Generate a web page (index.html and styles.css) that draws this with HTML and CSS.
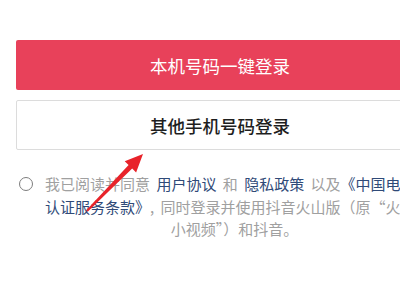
FILE: index.html
```html
<!DOCTYPE html>
<html lang="zh-CN">
<head>
<meta charset="utf-8">
<link rel="stylesheet" href="styles.css">
</head>
<body>
<div class="page">
  <div class="actions">
    <button class="btn btn-primary">本机号码一键登录</button>
    <button class="btn btn-secondary">其他手机号码登录</button>
  </div>
  <div class="agree">
    <span class="check"></span>
    <p class="agree-text"><span class="line">我已阅读并同意 <a class="link">用户协议</a> 和 <a class="link">隐私政策</a> 以及<a class="link">《中国电信</a></span><span class="line"><a class="link">认证服务条款》</a>, 同时登录并使用抖音火山版（原“火山</span><span class="line last">小视频”）和抖音。</span></p>
  </div>
  <svg class="arrow" width="400" height="300" viewBox="0 0 400 300">
    <polygon points="143,154 136.1,172.4 132.2,168.6 87.7,211.7 86.3,210.3 128.6,165.1 124.7,161.2" fill="#e8232a"/>
  </svg>
</div>
</body>
</html>
```
FILE: styles.css
```css
html, body {
  margin: 0;
  padding: 0;
  overflow: hidden;
  background: #fff;
}
body {
  width: 400px;
  height: 300px;
  font-family: "Noto Sans CJK SC", "Noto Sans", sans-serif;
}
.page {
  position: relative;
  width: 440px;
  height: 300px;
  padding-top: 40px;
  box-sizing: border-box;
}
.actions {
  display: flex;
  flex-direction: column;
  gap: 10px;
  margin: 0 16px;
}
.btn {
  display: flex;
  align-items: center;
  justify-content: center;
  height: 50px;
  border-radius: 2px;
  font-family: inherit;
  font-size: 17.5px;
  padding: 0;
  cursor: pointer;
}
.btn-primary {
  background: #e8415a;
  color: #fff;
  border: none;
  font-weight: 400;
}
.btn-secondary {
  background: #fff;
  color: #1e1e1e;
  border: 1px solid #dcdcdc;
  font-weight: 500;
}
.agree {
  display: flex;
  align-items: flex-start;
  margin: 23px 16px 0 19px;
}
.check {
  flex: none;
  box-sizing: border-box;
  width: 14px;
  height: 14px;
  border: 1.6px solid #7d7d7d;
  border-radius: 50%;
  margin-top: 4px;
}
.agree-text {
  margin: 0 0 0 12px;
  flex: 1;
  font-size: 15px;
  line-height: 22.5px;
  color: #a0a0a0;
  word-spacing: 3px;
  white-space: nowrap;
}
.line {
  display: block;
  text-align: left;
}
.line.last {
  text-align: center;
}
.link {
  color: #2f4a78;
}
.arrow {
  position: absolute;
  left: 0;
  top: 0;
  pointer-events: none;
}
```
